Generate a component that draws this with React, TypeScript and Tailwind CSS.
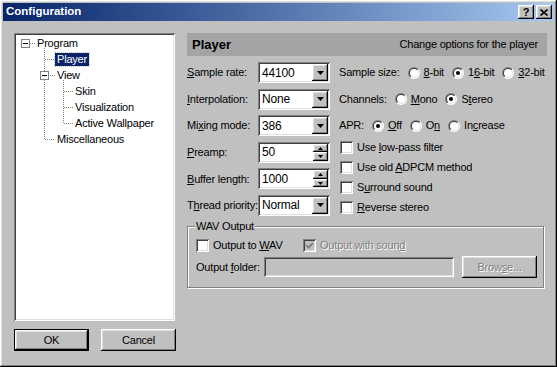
import React from "react";

const raised =
  "shadow-[inset_-1px_-1px_#000,inset_1px_1px_#fff,inset_-2px_-2px_#808080,inset_2px_2px_#dfdfdf]";
const sunken =
  "shadow-[inset_1px_1px_#808080,inset_-1px_-1px_#fff,inset_2px_2px_#404040,inset_-2px_-2px_#dfdfdf]";
const disabledText = "text-[#808080] [text-shadow:1px_1px_0_#fff]";

function Mn({ t, i }: { t: string; i: number }) {
  return (
    <>
      {t.slice(0, i)}
      <u>{t[i]}</u>
      {t.slice(i + 1)}
    </>
  );
}

function Radio({ on }: { on?: boolean }) {
  return (
    <svg width="12" height="12" viewBox="0 0 12 12" className="shrink-0">
      <defs>
        <linearGradient id="ro" x1="0" y1="0" x2="1" y2="1">
          <stop offset="0.5" stopColor="#808080" />
          <stop offset="0.5" stopColor="#ffffff" />
        </linearGradient>
        <linearGradient id="ri" x1="0" y1="0" x2="1" y2="1">
          <stop offset="0.5" stopColor="#404040" />
          <stop offset="0.5" stopColor="#dfdfdf" />
        </linearGradient>
      </defs>
      <circle cx="6" cy="6" r="6" fill="url(#ro)" />
      <circle cx="6" cy="6" r="5" fill="url(#ri)" />
      <circle cx="6" cy="6" r="4" fill="#fff" />
      {on && <circle cx="6" cy="6" r="2" fill="#000" />}
    </svg>
  );
}

function Check({ checked, disabled }: { checked?: boolean; disabled?: boolean }) {
  return (
    <span
      className={`w-[13px] h-[13px] shrink-0 flex items-center justify-center ${sunken} ${
        disabled ? "bg-[#c0c0c0]" : "bg-white"
      }`}
    >
      {checked && (
        <svg width="9" height="9" viewBox="0 0 9 9">
          <polyline
            points="1,4 3.5,6.5 8,2"
            fill="none"
            stroke={disabled ? "#808080" : "#000"}
            strokeWidth="1.8"
          />
        </svg>
      )}
    </span>
  );
}

function Arrow({ up, small }: { up?: boolean; small?: boolean }) {
  const w = small ? 5 : 7;
  const h = small ? 3 : 4;
  return (
    <svg width={w} height={h} viewBox={`0 0 ${w} ${h}`}>
      <polygon
        points={up ? `0,${h} ${w},${h} ${w / 2},0` : `0,0 ${w},0 ${w / 2},${h}`}
        fill="#000"
      />
    </svg>
  );
}

function Combo({ value }: { value: string }) {
  return (
    <div className={`w-[72px] h-[21px] bg-white flex items-center pl-[4px] p-[2px] ${sunken}`}>
      <span className="flex-1 text-[12px]">{value}</span>
      <span className={`w-[16px] h-[17px] bg-[#c0c0c0] flex items-center justify-center ${raised}`}>
        <Arrow />
      </span>
    </div>
  );
}

function Spin({ value }: { value: string }) {
  return (
    <div className={`w-[72px] h-[21px] bg-white flex items-center pl-[4px] p-[2px] ${sunken}`}>
      <span className="flex-1 text-[12px]">{value}</span>
      <span className="w-[15px] h-[17px] flex flex-col">
        <span className={`flex-1 bg-[#c0c0c0] flex items-center justify-center ${raised}`}>
          <Arrow up small />
        </span>
        <span className={`flex-1 bg-[#c0c0c0] flex items-center justify-center ${raised}`}>
          <Arrow small />
        </span>
      </span>
    </div>
  );
}

const leftRows = [
  { label: "Sample rate:", u: 0, value: "44100", spin: false },
  { label: "Interpolation:", u: 0, value: "None", spin: false },
  { label: "Mixing mode:", u: 2, value: "386", spin: false },
  { label: "Preamp:", u: 0, value: "50", spin: true },
  { label: "Buffer length:", u: 0, value: "1000", spin: true },
  { label: "Thread priority:", u: 1, value: "Normal", spin: false },
];

function RadioItem({ t, i, on }: { t: string; i: number; on?: boolean }) {
  return (
    <span className="flex items-center gap-[4px] ml-[8px]">
      <Radio on={on} />
      <span>
        <Mn t={t} i={i} />
      </span>
    </span>
  );
}

function TreeRow({ pl, text, selected }: { pl: number; text: string; selected?: boolean }) {
  return (
    <div className="h-[16px] flex items-center" style={{ paddingLeft: pl }}>
      <span
        className={`px-[2px] leading-[13px] ${
          selected ? "bg-[#0a246a] text-white outline outline-1 outline-dotted outline-[#c0c0c0]" : ""
        }`}
      >
        {text}
      </span>
    </div>
  );
}

export default function App() {
  return (
    <div
      className={`w-[557px] h-[367px] bg-[#c0c0c0] p-[3px] overflow-hidden text-[11px] text-black font-[family-name:'Liberation_Sans',Arial,sans-serif] tracking-[-0.2px] ${raised}`}
    >
      {/* title bar */}
      <div className="h-[18px] flex items-center justify-between pl-[3px] pr-[2px] bg-linear-to-r from-[#0a246a] to-[#a6caf0]">
        <span className="text-white font-bold text-[11.5px] tracking-normal">Configuration</span>
        <div className="flex gap-[2px]">
          <span className={`w-[16px] h-[14px] bg-[#c0c0c0] flex items-center justify-center font-bold text-[11px] leading-none ${raised}`}>
            ?
          </span>
          <span className={`w-[16px] h-[14px] bg-[#c0c0c0] flex items-center justify-center ${raised}`}>
            <svg width="8" height="7" viewBox="0 0 8 7">
              <path d="M0.5 0.5 L7.5 6.5 M7.5 0.5 L0.5 6.5" stroke="#000" strokeWidth="1.6" />
            </svg>
          </span>
        </div>
      </div>

      <div className="flex gap-[11px] pl-[11px] pt-[12px]">
        {/* left column */}
        <div className="w-[162px] flex flex-col">
          <div className={`relative w-[161px] h-[288px] bg-white pt-[2px] ${sunken}`}>
            <svg className="absolute left-0 top-0" width="161" height="288" shapeRendering="crispEdges">
              <g stroke="#808080" strokeDasharray="1 1">
                <line x1="16" y1="10.5" x2="21" y2="10.5" />
                <line x1="30.5" y1="15" x2="30.5" y2="106" />
                <line x1="31" y1="26.5" x2="41" y2="26.5" />
                <line x1="36" y1="42.5" x2="41" y2="42.5" />
                <line x1="31" y1="106.5" x2="41" y2="106.5" />
                <line x1="49.5" y1="47" x2="49.5" y2="90" />
                <line x1="50" y1="58.5" x2="59" y2="58.5" />
                <line x1="50" y1="74.5" x2="59" y2="74.5" />
                <line x1="50" y1="90.5" x2="59" y2="90.5" />
              </g>
              <g>
                <rect x="7.5" y="6.5" width="8" height="8" fill="#fff" stroke="#808080" />
                <line x1="9" y1="10.5" x2="14" y2="10.5" stroke="#000" />
                <rect x="26.5" y="38.5" width="8" height="8" fill="#fff" stroke="#808080" />
                <line x1="28" y1="42.5" x2="33" y2="42.5" stroke="#000" />
              </g>
            </svg>
            <div className="relative">
              <TreeRow pl={21} text="Program" />
              <TreeRow pl={41} text="Player" selected />
              <TreeRow pl={41} text="View" />
              <TreeRow pl={59} text="Skin" />
              <TreeRow pl={59} text="Visualization" />
              <TreeRow pl={59} text="Active Wallpaper" />
              <TreeRow pl={41} text="Miscellaneous" />
            </div>
          </div>
          <div className="flex gap-[12px] mt-[8px]">
            <button className={`w-[75px] h-[22px] bg-[#c0c0c0] border border-black flex items-center justify-center ${raised}`}>
              OK
            </button>
            <button className={`w-[75px] h-[22px] bg-[#c0c0c0] flex items-center justify-center ${raised}`}>
              Cancel
            </button>
          </div>
        </div>

        {/* right column */}
        <div className="w-[360px] flex flex-col">
          <div className="h-[23px] bg-[#a4a4a4] flex items-center justify-between pl-[5px] pr-[9px]">
            <span className="font-bold text-[13px] tracking-normal">Player</span>
            <span>Change options for the player</span>
          </div>

          <div className="flex mt-[6px] gap-[9px]">
            <div className="flex flex-col gap-[5.6px]">
              {leftRows.map((r) => (
                <div key={r.label} className="h-[21px] flex items-center">
                  <span className="w-[71px] whitespace-nowrap">
                    <Mn t={r.label} i={r.u} />
                  </span>
                  {r.spin ? <Spin value={r.value} /> : <Combo value={r.value} />}
                </div>
              ))}
            </div>

            <div className="flex flex-col">
              <div className="flex flex-col gap-[5.6px]">
                <div className="h-[21px] flex items-center">
                  <span>Sample size:</span>
                  <RadioItem t="8-bit" i={0} />
                  <RadioItem t="16-bit" i={1} on />
                  <RadioItem t="32-bit" i={0} />
                </div>
                <div className="h-[21px] flex items-center">
                  <span>Channels:</span>
                  <RadioItem t="Mono" i={0} />
                  <RadioItem t="Stereo" i={1} on />
                </div>
                <div className="h-[21px] flex items-center">
                  <span>APR:</span>
                  <RadioItem t="Off" i={0} on />
                  <RadioItem t="On" i={1} />
                  <RadioItem t="Increase" i={2} />
                </div>
              </div>
              <div className="mt-[1px] flex flex-col">
                {[
                  ["Use low-pass filter", 4],
                  ["Use old ADPCM method", 8],
                  ["Surround sound", 1],
                  ["Reverse stereo", 0],
                ].map(([t, i]) => (
                  <div key={t as string} className="h-[20px] flex items-center gap-[4px] pl-[1px]">
                    <Check />
                    <span>
                      <Mn t={t as string} i={i as number} />
                    </span>
                  </div>
                ))}
              </div>
            </div>
          </div>

          {/* WAV output group */}
          <div className="relative w-[357px] h-[62px] mt-[9px] border border-[#808080] shadow-[inset_1px_1px_#fff,1px_1px_#fff] pl-[8px] pt-[11px]">
            <span className="absolute left-[7px] -top-[7px] px-[1px] bg-[#c0c0c0] leading-[13px]">WAV Output</span>
            <div className="h-[14px] flex items-center">
              <span className="w-[107px] flex items-center gap-[4px]">
                <Check />
                <span>
                  <Mn t="Output to WAV" i={10} />
                </span>
              </span>
              <span className="flex items-center gap-[4px]">
                <Check checked disabled />
                <span className={disabledText}>
                  <Mn t="Output with sound" i={16} />
                </span>
              </span>
            </div>
            <div className="flex items-center mt-[4px] h-[22px]">
              <span className="w-[68px]">
                <Mn t="Output folder:" i={7} />
              </span>
              <div className={`w-[190px] h-[20px] bg-[#c0c0c0] ${sunken}`} />
              <button className={`ml-[8px] w-[75px] h-[22px] bg-[#c0c0c0] flex items-center justify-center ${raised}`}>
                <span className={disabledText}>
                  <Mn t="Browse..." i={4} />
                </span>
              </button>
            </div>
          </div>
        </div>
      </div>
    </div>
  );
}
